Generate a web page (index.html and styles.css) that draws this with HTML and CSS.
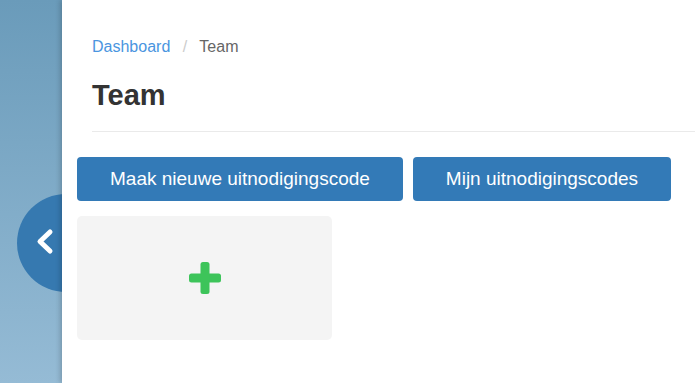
FILE: index.html
```html
<!DOCTYPE html>
<html lang="nl">
<head>
    <meta charset="UTF-8">
    <title>Team</title>
    <link rel="stylesheet" href="styles.css">
</head>
<body>
    <aside class="sidebar"></aside>

    <button class="sidebar-toggle" type="button" aria-label="Menu sluiten">
        <svg width="98" height="98" viewBox="0 0 98 98">
            <polyline points="33,38 23,47.5 33,57" fill="none" stroke="#fff" stroke-width="5" stroke-linecap="round" stroke-linejoin="round"/>
        </svg>
    </button>

    <main class="panel">
        <div class="page-header">
            <nav class="breadcrumb">
                <a href="#">Dashboard</a>
                <span class="divider">/</span>
                <span class="current">Team</span>
            </nav>
            <h1>Team</h1>
        </div>

        <div class="actions">
            <button class="btn" type="button">Maak nieuwe uitnodigingscode</button>
            <button class="btn" type="button">Mijn uitnodigingscodes</button>
        </div>

        <div class="team-grid">
            <a class="team-card add" href="#" aria-label="Nieuw team">
                <svg width="32" height="32" viewBox="0 0 32 32">
                    <rect x="0" y="11.5" width="32" height="9" rx="2.5" fill="#3dc45a"/>
                    <rect x="11.5" y="0" width="9" height="32" rx="2.5" fill="#3dc45a"/>
                </svg>
            </a>
        </div>
    </main>
</body>
</html>
```

FILE: styles.css
```css
body {
    font-family: 'Liberation Sans', Arial, sans-serif;
    margin: 0;
    display: flex;
    min-height: 100vh;
    overflow: hidden;
}

.sidebar {
    width: 62px;
    flex-shrink: 0;
    background: linear-gradient(180deg, #6a9bba 0%, #95bbd5 100%);
}

.sidebar-toggle {
    position: absolute;
    left: 17px;
    top: 194px;
    width: 98px;
    height: 98px;
    padding: 0;
    border: none;
    border-radius: 50%;
    background-color: #3679b0;
    cursor: pointer;
}

.sidebar-toggle svg {
    display: block;
}

.panel {
    flex: 1;
    position: relative;
    z-index: 1;
    background: white;
    padding: 37px 0 0 15px;
    box-shadow: -2px 0 5px rgba(0,0,0,0.18);
}

.page-header {
    margin-left: 15px;
    border-bottom: 1px solid #eaeaea;
    padding-bottom: 19px;
}

.breadcrumb {
    font-size: 16px;
    line-height: 20px;
    color: #666;
}

.breadcrumb a {
    color: #4a95e0;
    text-decoration: none;
}

.breadcrumb .divider {
    color: #ccc;
    padding: 0 8px;
}

h1 {
    font-size: 29px;
    line-height: 34px;
    font-weight: bold;
    color: #333;
    margin: 21px 0 0;
}

.actions {
    display: flex;
    gap: 10px;
    margin-top: 25px;
}

.btn {
    font-family: inherit;
    background-color: #337ab7;
    color: white;
    border: none;
    height: 44px;
    padding: 0 33px;
    font-size: 19px;
    border-radius: 4px;
    cursor: pointer;
}

.btn:hover {
    background-color: #2e6da4;
}

.team-grid {
    display: flex;
    margin-top: 15px;
}

.team-card {
    width: 255px;
    height: 124px;
    background-color: #f4f4f4;
    border-radius: 5px;
    display: flex;
    align-items: center;
    justify-content: center;
}
```
